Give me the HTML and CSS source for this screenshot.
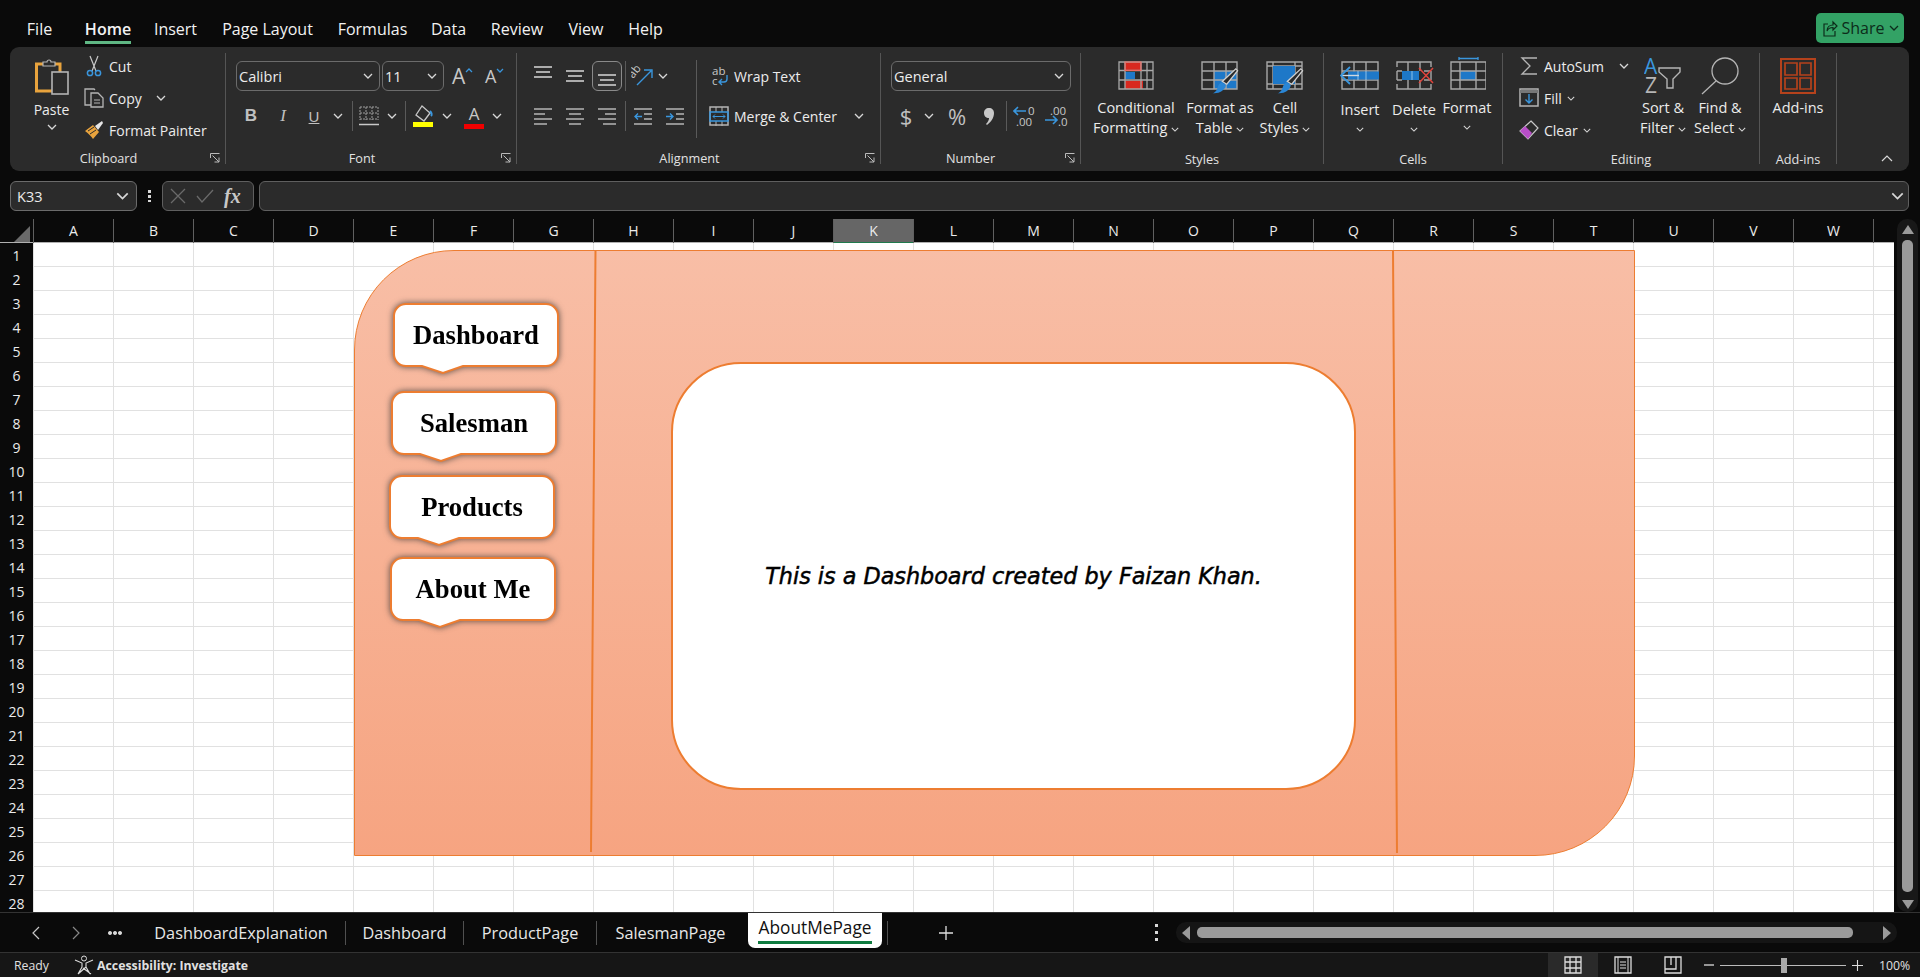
FILE: index.html
```html
<!DOCTYPE html>
<html lang="en">

<head>
    <meta charset="UTF-8">
    <title>AboutMePage - Excel</title>
    <link rel="stylesheet" href="styles.css">
</head>

<body>
    <!-- shared icons -->
    <svg class="sprites" width="0" height="0">
        <symbol id="chev" viewBox="0 0 10 6"><path d="M1 1l4 4 4-4" fill="none" stroke="#d8d8d8" stroke-width="1.3"/></symbol>
        <symbol id="launch" viewBox="0 0 10 10"><path d="M.5 5V.5H9.500M2.500 2.500L9 9M9 4.500V9H4.500" fill="none" stroke="#bbb" stroke-width="1"/></symbol>
        <symbol id="top" viewBox="0 0 18 16"><path d="M0 3h18M2 8h14M0 13h18" stroke="#d8d8d8" stroke-width="1.400"/></symbol>
        <symbol id="left" viewBox="0 0 18 17"><path d="M0 1h18M0 6h11M0 11h18M0 16h13" stroke="#b5b5b5" stroke-width="1.500"/></symbol>
        <symbol id="center" viewBox="0 0 18 17"><path d="M0 1h18M3 6h12M0 11h18M3 16h12" stroke="#b5b5b5" stroke-width="1.500"/></symbol>
        <symbol id="right" viewBox="0 0 18 17"><path d="M0 1h18M7 6h11M0 11h18M5 16h13" stroke="#b5b5b5" stroke-width="1.500"/></symbol>
        <symbol id="brush" viewBox="0 0 30 30"><path d="M27 1l2 2-12 15-5-3z" fill="#2b2b2b" stroke="#d0d0d0" stroke-width="1.400"/><path d="M11 16l5 3c-1 6-8 10-15 9 4-1 5-4 6-7 1-3 2-4 4-5z" fill="#2a86d6"/></symbol>
    </svg>

    <!-- menu row -->
    <header class="menu">
        <a>File</a>
        <a class="menu-active"><span>Home</span></a>
        <a>Insert</a>
        <a>Page Layout</a>
        <a>Formulas</a>
        <a>Data</a>
        <a>Review</a>
        <a>View</a>
        <a>Help</a>
        <button class="share">
            <svg width="16" height="18" viewBox="0 0 16 18"><path d="M6 5H2v12h11v-5M5 12c0-4 3-6 6-6V3l4 4-4 4V8.500c-3 0-5 1-6 3.500z" fill="none" stroke="#0c2c1a" stroke-width="1.200"/></svg>
            Share
            <svg class="chev" viewBox="0 0 10 6"><path d="M1 1l4 4 4-4" fill="none" stroke="#0c2c1a" stroke-width="1.300"/></svg>
        </button>
    </header>

    <!-- ribbon -->
    <section class="ribbon">
        <div class="group g-clipboard">
            <div class="group-body">
                <div class="paste">
                    <svg width="36" height="38" viewBox="0 0 36 38">
                        <path d="M9 7H2.500v27H26V7h-6" fill="none" stroke="#e8a33d" stroke-width="3"/>
                        <path d="M9 9V5h4a2 2 0 0 1 4 0h4v4z" fill="#2b2b2b" stroke="#b5b5b5" stroke-width="1.200"/>
                        <rect x="18" y="15" width="16" height="22" fill="#2b2b2b" stroke="#b5b5b5" stroke-width="1.600"/>
                    </svg>
                    <span class="paste-label">Paste</span>
                    <svg class="chev"><use href="#chev"/></svg>
                </div>
                <div class="tool-col">
                    <div class="tool">
                        <svg width="20" height="22" viewBox="0 0 20 22"><path d="M6 1l6 15M14 1L8 16" stroke="#c8c8c8" stroke-width="1.200"/><circle cx="6" cy="18" r="2.600" fill="none" stroke="#3a96dd" stroke-width="1.500"/><circle cx="14" cy="18" r="2.600" fill="none" stroke="#3a96dd" stroke-width="1.500"/></svg>
                        <span>Cut</span>
                    </div>
                    <div class="tool">
                        <svg width="20" height="20" viewBox="0 0 20 20"><path d="M7 17H1V1h9l1 1" fill="none" stroke="#b5b5b5" stroke-width="1.300"/><path d="M7 5h7l5 5v9H7z" fill="#2b2b2b" stroke="#b5b5b5" stroke-width="1.300"/><path d="M10 12h6M10 15h6" stroke="#b5b5b5"/></svg>
                        <span>Copy</span>
                        <svg class="chev chev-copy"><use href="#chev"/></svg>
                    </div>
                    <div class="tool">
                        <svg width="20" height="20" viewBox="0 0 20 20"><path d="M1 11l8-6 6 7-6 7c-2-3-5-6-8-8z" fill="#e8a33d"/><path d="M4 11l6-4M6 14l6-4" stroke="#2b2b2b"/><path d="M11 6l7-5 1 2-5 7z" fill="#e6e6e6"/></svg>
                        <span>Format Painter</span>
                    </div>
                </div>
            </div>
            <div class="group-label">Clipboard</div>
            <svg class="launcher"><use href="#launch"/></svg>
        </div>

        <div class="group g-font">
            <div class="group-body stack">
                <div class="font-row1">
                    <div class="combo combo-font">Calibri<svg class="chev"><use href="#chev"/></svg></div>
                    <div class="combo combo-size">11<svg class="chev"><use href="#chev"/></svg></div>
                    <span class="size-a size-grow">A<svg width="8" height="5" viewBox="0 0 8 5"><path d="M1 4l3-3 3 3" fill="none" stroke="#3a96dd" stroke-width="1.300"/></svg></span>
                    <span class="size-a size-shrink">A<svg width="8" height="5" viewBox="0 0 8 5"><path d="M1 1l3 3 3-3" fill="none" stroke="#3a96dd" stroke-width="1.300"/></svg></span>
                </div>
                <div class="font-row2 cells">
                    <b class="fmt fmt-b">B</b>
                    <i class="fmt fmt-i">I</i>
                    <u class="fmt fmt-u">U</u>
                    <svg class="chev"><use href="#chev"/></svg>
                    <span class="vsep"></span>
                    <svg width="20" height="20" viewBox="0 0 20 20"><path d="M1 1h18M1 7h18M1 13h18M1 1v13M7 1v13M13 1v13M19 1v13" stroke="#a0a0a0" stroke-dasharray="2 1" fill="none"/><path d="M0 18.500h20" stroke="#c8c8c8" stroke-width="1.500"/></svg>
                    <svg class="chev"><use href="#chev"/></svg>
                    <span class="vsep"></span>
                    <svg width="20" height="24" viewBox="0 0 20 24"><path d="M9 2l8 7-6 8-8-6z" fill="none" stroke="#c8c8c8" stroke-width="1.300"/><path d="M17 7c2 2 2 4 1 5" stroke="#3a96dd" stroke-width="2" fill="none"/><rect y="18" width="20" height="5" fill="#ffff00"/></svg>
                    <svg class="chev"><use href="#chev"/></svg>
                    <span class="color-a">A</span>
                    <svg class="chev"><use href="#chev"/></svg>
                </div>
            </div>
            <div class="group-label">Font</div>
            <svg class="launcher"><use href="#launch"/></svg>
        </div>

        <div class="group g-align">
            <div class="group-body">
                <div class="align-grid cells">
                    <svg class="al al-up"><use href="#top"/></svg>
                    <svg class="al"><use href="#top"/></svg>
                    <span class="al-active"><svg class="al"><use href="#top"/></svg></span>
                    <span class="vsep"></span>
                    <span class="orient">
                        <svg width="22" height="22" viewBox="0 0 22 22"><text class="mini" transform="translate(2 14) rotate(-50)">ab</text><path d="M6 20L20 6M13 5h8v8" fill="none" stroke="#3a96dd" stroke-width="1.400"/></svg>
                        <svg class="chev"><use href="#chev"/></svg>
                    </span>

                    <svg class="al-row2"><use href="#left"/></svg>
                    <svg class="al-row2"><use href="#center"/></svg>
                    <svg class="al-row2"><use href="#right"/></svg>
                    <span class="vsep"></span>
                    <svg width="18" height="17" viewBox="0 0 18 17"><path d="M0 1h18M10 6h8M10 11h8M0 16h18" stroke="#b5b5b5" stroke-width="1.500"/><path d="M8 8.500H1M4 5.500l-3 3 3 3" fill="none" stroke="#3a96dd" stroke-width="1.400"/></svg>
                    <svg width="18" height="17" viewBox="0 0 18 17"><path d="M0 1h18M10 6h8M10 11h8M0 16h18" stroke="#b5b5b5" stroke-width="1.500"/><path d="M0 8.500h7M4 5.500l3 3-3 3" fill="none" stroke="#3a96dd" stroke-width="1.400"/></svg>
                </div>
                <span class="vsep vsep-tall"></span>
                <div class="wrap-col">
                    <div class="tool">
                        <svg width="20" height="20" viewBox="0 0 20 20"><text x="3" y="9" class="mini">ab</text><text x="3" y="19" class="mini">c</text><path d="M18 9v4c0 2-1 3-3 3H10M13 13l-3 3 3 3" fill="none" stroke="#3a96dd" stroke-width="1.400"/></svg>
                        <span>Wrap Text</span>
                    </div>
                    <div class="tool">
                        <svg width="20" height="20" viewBox="0 0 20 20"><rect x="1" y="1" width="18" height="18" fill="none" stroke="#b5b5b5" stroke-width="1.500"/><path d="M7 1v5M13 1v5M7 15v5M13 15v5" stroke="#b5b5b5"/><rect x="1" y="6" width="18" height="9" fill="none" stroke="#3a96dd" stroke-width="1.500"/><path d="M4 10.500h12M6 8.500l-2 2 2 2M14 8.500l2 2-2 2" fill="none" stroke="#3a96dd"/></svg>
                        <span>Merge &amp; Center</span>
                        <svg class="chev chev-merge"><use href="#chev"/></svg>
                    </div>
                </div>
            </div>
            <div class="group-label">Alignment</div>
            <svg class="launcher"><use href="#launch"/></svg>
        </div>

        <div class="group g-number">
            <div class="group-body stack">
                <div class="combo combo-number">General<svg class="chev"><use href="#chev"/></svg></div>
                <div class="number-row cells">
                    <span class="num-sign">$</span>
                    <svg class="chev"><use href="#chev"/></svg>
                    <span class="num-sign">%</span>
                    <svg width="10" height="17" viewBox="0 0 10 17"><path d="M5 0c3 0 5 2 5 5 0 5-3 9-7 12l-1-1c2-2 3-4 3-6-3 0-5-2-5-5s2-5 5-5z" fill="#c8c8c8"/></svg>
                    <span class="vsep"></span>
                    <svg width="22" height="22" viewBox="0 0 22 22"><text x="15" y="10" class="mini">0</text><text x="3" y="21" class="mini">.00</text><path d="M13 6H1M5 2L1 6l4 4" fill="none" stroke="#3a96dd" stroke-width="1.600"/></svg>
                    <svg width="24" height="22" viewBox="0 0 24 22"><text x="6" y="10" class="mini">.00</text><text x="14" y="21" class="mini">.0</text><path d="M1 15h12M9 11l4 4-4 4" fill="none" stroke="#3a96dd" stroke-width="1.600"/></svg>
                </div>
            </div>
            <div class="group-label">Number</div>
            <svg class="launcher"><use href="#launch"/></svg>
        </div>

        <div class="group g-styles">
            <div class="group-body big-row styles-row">
                <div class="big">
                    <span class="big-icon">
                        <svg width="36" height="30" viewBox="0 0 36 30"><rect x="7" y="1" width="16" height="8.500" fill="#d8281f"/><rect x="7" y="11" width="10" height="7" fill="#1e78c8"/><rect x="7" y="19.500" width="18" height="8.500" fill="#d8281f"/><path d="M1 1h34v27H1zM1 9.500h34M1 19h34M7 1v27M23 1v27M29 1v27" fill="none" stroke="#a8a8a8" stroke-width="1.300"/><rect x="7" y="1" width="16" height="8.500" fill="none" stroke="#ee6a62"/></svg>
                    </span>
                    <span>Conditional</span>
                    <span>Formatting <svg class="chev chev-sm"><use href="#chev"/></svg></span>
                </div>
                <div class="big">
                    <span class="big-icon">
                        <svg width="40" height="38" viewBox="0 0 40 38"><rect x="14" y="14" width="23" height="18" fill="#1e78c8"/><path d="M2 5h35v27H2zM2 14h35M2 23h35M14 5v27M26 5v27" fill="none" stroke="#a8a8a8" stroke-width="1.400"/><use href="#brush" x="11" y="11" width="28" height="27"/></svg>
                    </span>
                    <span>Format as</span>
                    <span>Table <svg class="chev chev-sm"><use href="#chev"/></svg></span>
                </div>
                <div class="big">
                    <span class="big-icon">
                        <svg width="40" height="38" viewBox="0 0 40 38"><path d="M2 5h35v27H2zM2 9h35M2 27h35M8 5v27M30 5v27" fill="none" stroke="#a8a8a8" stroke-width="1.400"/><rect x="8" y="9" width="22" height="18" fill="#1e78c8"/><use href="#brush" x="11" y="11" width="28" height="27"/></svg>
                    </span>
                    <span>Cell</span>
                    <span>Styles <svg class="chev chev-sm"><use href="#chev"/></svg></span>
                </div>
            </div>
            <div class="group-label">Styles</div>
        </div>

        <div class="group g-cells">
            <div class="group-body big-row cells-row">
                <div class="big big-low">
                    <span class="big-icon">
                        <svg width="40" height="30" viewBox="0 0 40 30"><path d="M2 1h36v27H2zM2 10h36M2 19h36M14 1v27M26 1v27" fill="none" stroke="#a8a8a8" stroke-width="1.400"/><path d="M8 10.500h31v8H8z" fill="#1e78c8"/><path d="M26 10v9M18 10v9" stroke="#8cc0e8"/><path d="M19 14.500H1" stroke="#d0d8e0" stroke-width="1.400"/><path d="M10 6l-9 8.500 9 8.500" fill="none" stroke="#3a96dd" stroke-width="1.800"/></svg>
                    </span>
                    <span>Insert</span>
                    <svg class="chev chev-sm"><use href="#chev"/></svg>
                </div>
                <div class="big big-low">
                    <span class="big-icon">
                        <svg width="40" height="30" viewBox="0 0 40 30"><path d="M3 6V1h34v5M3 23v5h34v-5M3 10h5M3 19h5M3 10v9M14 1v9M14 19v9M26 1v9M26 19v9M30 10h7M30 19h7M37 10v9" fill="none" stroke="#a8a8a8" stroke-width="1.400"/><rect x="8" y="10" width="17" height="9" fill="#1e78c8"/><path d="M18 10v9" stroke="#8cc0e8"/><path d="M25 7l14 15M39 7L25 22" stroke="#e0443c" stroke-width="1.500"/></svg>
                    </span>
                    <span>Delete</span>
                    <svg class="chev chev-sm"><use href="#chev"/></svg>
                </div>
                <div class="big">
                    <span class="big-icon">
                        <svg width="38" height="38" viewBox="0 0 38 38"><path d="M11 1.500h19M11 0v3M30 0v3" stroke="#3a96dd" stroke-width="1.300"/><rect x="12" y="14" width="16" height="9" fill="#1e78c8"/><path d="M3 5h35v27H3zM3 14h35M3 23h35M12 5v27M28 5v27" fill="none" stroke="#a8a8a8" stroke-width="1.400"/></svg>
                    </span>
                    <span>Format</span>
                    <svg class="chev chev-sm"><use href="#chev"/></svg>
                </div>
            </div>
            <div class="group-label">Cells</div>
        </div>

        <div class="group g-editing">
            <div class="group-body">
                <div class="tool-col edit-col">
                    <div class="tool">
                        <svg width="20" height="20" viewBox="0 0 20 20"><path d="M18 2H3l8 8-8 8h15" fill="none" stroke="#b5b5b5" stroke-width="1.300"/></svg>
                        <span>AutoSum</span>
                        <svg class="chev chev-sum"><use href="#chev"/></svg>
                    </div>
                    <div class="tool">
                        <svg width="20" height="20" viewBox="0 0 20 20"><rect x="1" y="1" width="18" height="17" fill="none" stroke="#b5b5b5" stroke-width="1.500"/><path d="M1 3.500h18" stroke="#777" stroke-width="3"/><path d="M10 6v9M6.500 11.500L10 15l3.500-3.500" fill="none" stroke="#3a96dd" stroke-width="1.400"/></svg>
                        <span>Fill</span>
                        <svg class="chev chev-sm"><use href="#chev"/></svg>
                    </div>
                    <div class="tool">
                        <svg width="20" height="20" viewBox="0 0 20 20"><path d="M12 1l7 7-10 11-8-8z" fill="none" stroke="#c8c8c8" stroke-width="1.200"/><path d="M6 6l7 7-4 6-8-8z" fill="#b84ec8"/></svg>
                        <span>Clear</span>
                        <svg class="chev chev-sm"><use href="#chev"/></svg>
                    </div>
                </div>
                <div class="big">
                    <span class="big-icon">
                        <svg width="38" height="36" viewBox="0 0 38 36"><text x="0" y="16" class="sort-a">A</text><text x="1" y="35" class="sort-z">Z</text><path d="M15 10h21v4l-7 7v9h-6V21l-8-7z" fill="none" stroke="#b5b5b5" stroke-width="1.400"/></svg>
                    </span>
                    <span>Sort &amp;</span>
                    <span>Filter <svg class="chev chev-sm"><use href="#chev"/></svg></span>
                </div>
                <div class="big">
                    <span class="big-icon">
                        <svg width="38" height="38" viewBox="0 0 38 38"><circle cx="24" cy="14" r="13" fill="none" stroke="#b5b5b5" stroke-width="1.300"/><path d="M15 24L1 37" stroke="#b5b5b5" stroke-width="1.300"/></svg>
                    </span>
                    <span>Find &amp;</span>
                    <span>Select <svg class="chev chev-sm"><use href="#chev"/></svg></span>
                </div>
            </div>
            <div class="group-label">Editing</div>
        </div>

        <div class="group g-addins">
            <div class="group-body big-row">
                <div class="big">
                    <span class="big-icon">
                        <svg width="36" height="36" viewBox="0 0 36 36"><path d="M1 1h34v34H1z" fill="none" stroke="#b5421c" stroke-width="2"/><path d="M5 5h12v12H5zM20 5h11v12H20zM5 20h12v11H5zM20 20h11v11H20z" fill="none" stroke="#b5421c" stroke-width="1.700"/></svg>
                    </span>
                    <span>Add-ins</span>
                </div>
            </div>
            <div class="group-label">Add-ins</div>
        </div>

        <svg class="collapse" viewBox="0 0 12 7"><path d="M1 6l5-5 5 5" fill="none" stroke="#d8d8d8" stroke-width="1.200"/></svg>
    </section>

    <!-- formula bar -->
    <section class="formula">
        <div class="combo name-box">K33<svg class="chev chev-name"><use href="#chev"/></svg></div>
        <span class="dots"></span>
        <div class="fx-box">
            <svg width="16" height="16" viewBox="0 0 16 16"><path d="M1 1l14 14M15 1L1 15" stroke="#6a6a6a" stroke-width="1.300"/></svg>
            <svg width="18" height="14" viewBox="0 0 18 14"><path d="M1 7l5 6L17 1" fill="none" stroke="#6a6a6a" stroke-width="1.300"/></svg>
            <span class="fx">fx</span>
        </div>
        <div class="formula-input"><svg class="chev chev-name"><use href="#chev"/></svg></div>
    </section>

    <!-- column letters -->
    <div class="col-head">
        <div class="corner"></div>
        <span>A</span><span>B</span><span>C</span><span>D</span><span>E</span><span>F</span><span>G</span><span>H</span>
        <span>I</span><span>J</span><span class="col-active">K</span><span>L</span><span>M</span><span>N</span><span>O</span><span>P</span>
        <span>Q</span><span>R</span><span>S</span><span>T</span><span>U</span><span>V</span><span>W</span><span></span>
    </div>

    <main class="sheet">
        <div class="row-head">
            <span>1</span><span>2</span><span>3</span><span>4</span><span>5</span><span>6</span><span>7</span>
            <span>8</span><span>9</span><span>10</span><span>11</span><span>12</span><span>13</span><span>14</span>
            <span>15</span><span>16</span><span>17</span><span>18</span><span>19</span><span>20</span><span>21</span>
            <span>22</span><span>23</span><span>24</span><span>25</span><span>26</span><span>27</span><span>28</span>
        </div>

        <div class="grid">
            <!-- the dashboard shapes float on the cells -->
            <div class="panel">
                <svg class="panel-lines" width="1281" height="606" viewBox="0 0 1281 606">
                    <path d="M241.500 0L237 602M1039 0L1043 603" stroke="#ed7d31" stroke-width="2"/>
                </svg>

                <div class="callout call-dashboard"><svg width="170" height="72" viewBox="0 0 170 72"><path d="M13 1h140a12 12 0 0 1 12 12v38a12 12 0 0 1-12 12H70l-20 7-21-7H13A12 12 0 0 1 1 51V13A12 12 0 0 1 13 1z" fill="#fff" stroke="#ed7d31" stroke-width="2"/></svg><span>Dashboard</span></div>
                <div class="callout call-salesman"><svg width="170" height="72" viewBox="0 0 170 72"><path d="M13 1h140a12 12 0 0 1 12 12v38a12 12 0 0 1-12 12H70l-20 7-21-7H13A12 12 0 0 1 1 51V13A12 12 0 0 1 13 1z" fill="#fff" stroke="#ed7d31" stroke-width="2"/></svg><span>Salesman</span></div>
                <div class="callout call-products"><svg width="170" height="72" viewBox="0 0 170 72"><path d="M13 1h140a12 12 0 0 1 12 12v38a12 12 0 0 1-12 12H70l-20 7-21-7H13A12 12 0 0 1 1 51V13A12 12 0 0 1 13 1z" fill="#fff" stroke="#ed7d31" stroke-width="2"/></svg><span>Products</span></div>
                <div class="callout call-about"><svg width="170" height="72" viewBox="0 0 170 72"><path d="M13 1h140a12 12 0 0 1 12 12v38a12 12 0 0 1-12 12H70l-20 7-21-7H13A12 12 0 0 1 1 51V13A12 12 0 0 1 13 1z" fill="#fff" stroke="#ed7d31" stroke-width="2"/></svg><span>About Me</span></div>

                <div class="about-box">This is a Dashboard created by Faizan Khan.</div>
            </div>
        </div>
    </main>

    <div class="vscroll">
        <svg width="12" height="9" viewBox="0 0 12 9"><path d="M6 0l6 9H0z" fill="#9a9a9a"/></svg>
        <div class="vthumb"></div>
        <svg width="12" height="9" viewBox="0 0 12 9"><path d="M6 9L0 0h12z" fill="#9a9a9a"/></svg>
    </div>

    <!-- sheet tabs -->
    <nav class="tabs">
        <svg class="tab-nav" width="8" height="14" viewBox="0 0 8 14"><path d="M7 1L1 7l6 6" fill="none" stroke="#c8c8c8" stroke-width="1.200"/></svg>
        <svg class="tab-nav" width="8" height="14" viewBox="0 0 8 14"><path d="M1 1l6 6-6 6" fill="none" stroke="#888" stroke-width="1.200"/></svg>
        <svg class="tab-more" width="14" height="4" viewBox="0 0 14 4"><path d="M2 0a2 2 0 1 0 .01 0zM7 0a2 2 0 1 0 .01 0zM12 0a2 2 0 1 0 .01 0z" fill="#d8d8d8"/></svg>
        <a class="tab">DashboardExplanation</a>
        <a class="tab">Dashboard</a>
        <a class="tab">ProductPage</a>
        <a class="tab tab-last">SalesmanPage</a>
        <a class="tab-active"><span>AboutMePage</span></a>
        <span class="tab-sep"></span>
        <svg class="tab-add" width="14" height="14" viewBox="0 0 14 14"><path d="M7 0v14M0 7h14" stroke="#e0e0e0" stroke-width="1.300"/></svg>
        <span class="vdots"></span>
        <div class="hscroll">
            <svg width="8" height="14" viewBox="0 0 8 14"><path d="M8 0v14L0 7z" fill="#9a9a9a"/></svg>
            <div class="hthumb"></div>
            <svg width="8" height="14" viewBox="0 0 8 14"><path d="M0 0v14l8-7z" fill="#9a9a9a"/></svg>
        </div>
    </nav>

    <footer class="status">
        <span class="ready">Ready</span>
        <svg class="acc-icon" width="20" height="20" viewBox="0 0 20 20"><circle cx="10" cy="3.500" r="2.500" fill="none" stroke="#ddd"/><path d="M1 5l7 3v4l-4 7M19 5l-7 3v4l4 7M9 13l8 6M12 12l-8 7" fill="none" stroke="#ddd" stroke-width="1.100"/></svg>
        <b class="acc-text">Accessibility: Investigate</b>
        <div class="views">
            <span class="view view-on"><svg width="18" height="18" viewBox="0 0 18 18"><path d="M1 1h16v16H1zM1 6h16M1 12h16M6 1v16M12 1v16" fill="none" stroke="#ddd" stroke-width="1.300"/></svg></span>
            <span class="view"><svg width="18" height="18" viewBox="0 0 18 18"><path d="M1 1h16v16H1z" fill="none" stroke="#ddd" stroke-width="1.300"/><path d="M4 1v16M14 1v16M6 6h6M6 9h6M6 12h6" stroke="#ddd"/></svg></span>
            <span class="view"><svg width="18" height="18" viewBox="0 0 18 18"><path d="M1 1h16v16H1zM1 13h11V1M7 1v8" fill="none" stroke="#ddd" stroke-width="1.300"/></svg></span>
        </div>
        <div class="zoom">
            <svg width="10" height="10" viewBox="0 0 10 10"><path d="M0 5h10" stroke="#ddd" stroke-width="1.300"/></svg>
            <div class="slider"><i></i></div>
            <svg width="11" height="11" viewBox="0 0 11 11"><path d="M0 5.500h11M5.500 0v11" stroke="#ddd" stroke-width="1.100"/></svg>
            <span class="zoom-pct">100%</span>
        </div>
    </footer>
</body>

</html>
```

FILE: styles.css
```css
* {
    box-sizing: border-box;
}

html,
body {
    margin: 0;
    height: 977px;
    overflow: hidden;
}

body {
    display: flex;
    flex-direction: column;
    background: #0a0a0a;
    color: #ececec;
    font-family: "Open Sans", "Noto Sans", sans-serif;
    font-size: 14px;
}

.sprites {
    position: absolute;
}

svg {
    display: block;
    flex: none;
}

.chev {
    width: 10px;
    height: 6px;
}

.chev-sm {
    display: inline-block;
    width: 8px;
    height: 5px;
    vertical-align: middle;
}

/* menu row */
.menu {
    height: 47px;
    flex: none;
    display: grid;
    grid-template-columns: 49px 88px 47px 137px 73px 79px 58px 80px 39px 1fr;
    padding: 18px 16px 0 15px;
    font-size: 16px;
    line-height: 22px;
    text-align: center;
    color: #f2f2f2;
}

.menu-active span {
    display: inline-block;
    height: 26px;
    font-weight: 600;
    border-bottom: 3px solid #5fb784;
}

.share {
    justify-self: end;
    margin-top: -5px;
    width: 88px;
    height: 30px;
    display: flex;
    align-items: center;
    justify-content: center;
    gap: 4px;
    padding: 0;
    background: #33a265;
    border: none;
    border-radius: 5px;
    color: #0c2c1a;
    font: 16px "Open Sans", sans-serif;
}

/* ribbon */
.ribbon {
    height: 124px;
    flex: none;
    margin: 0 11px 0 10px;
    display: flex;
    background: #2b2b2b;
    border-radius: 9px;
}

.group {
    position: relative;
    height: 111px;
    margin-top: 6px;
    border-right: 1px solid #555;
    display: flex;
    flex-direction: column;
    flex: none;
}

.group-body {
    height: 99px;
    display: flex;
}

.group-label {
    height: 12px;
    padding-top: 1px;
    line-height: 12px;
    font-size: 12.700px;
    text-align: center;
    color: #e2e2e2;
}

.launcher {
    position: absolute;
    right: 5px;
    bottom: 1px;
    width: 10px;
    height: 10px;
}

.g-clipboard {
    width: 216px;
}

.g-font {
    width: 291px;
}

.g-align {
    width: 364px;
}

.g-number {
    width: 200px;
}

.g-styles {
    width: 243px;
}

.g-cells {
    width: 179px;
}

.g-editing {
    width: 257px;
}

.g-addins {
    width: 77px;
}

.g-clipboard .group-label,
.g-font .group-label,
.g-align .group-label {
    padding: 0 18px 0 0;
}

.g-number .group-label {
    padding: 0 20px 0 0;
}

.tool-col {
    display: flex;
    flex-direction: column;
    gap: 4px;
    margin: -1px 0 0 8px;
}

.tool {
    height: 28px;
    display: flex;
    align-items: center;
    gap: 5px;
    white-space: nowrap;
}

.paste {
    width: 49px;
    margin-left: 17px;
    padding-top: 4px;
    display: flex;
    flex-direction: column;
    align-items: center;
}

.paste-label {
    margin-top: 4px;
    line-height: 22px;
    height: 25px;
}

.chev-copy {
    margin-left: 9px;
}

.chev-merge {
    margin-left: 12px;
}

.chev-sum {
    margin-left: 10px;
}

.stack {
    flex-direction: column;
    gap: 10px;
    padding: 8px 0 0 10px;
}

.combo {
    height: 30px;
    display: flex;
    align-items: center;
    justify-content: space-between;
    padding: 0 6px 0 2px;
    border: 1px solid #6b6b6b;
    border-radius: 6px;
    font-size: 14.500px;
}

.font-row1 {
    display: flex;
    align-items: center;
}

.combo-font {
    width: 144px;
    margin-right: 2px;
}

.combo-size {
    width: 62px;
}

.size-a {
    position: relative;
    display: flex;
    color: #c8c8c8;
    line-height: 22px;
}

.size-grow {
    font-size: 21px;
    margin-left: 8px;
    width: 33px;
}

.size-shrink {
    font-size: 18px;
    width: 20px;
}

.size-a svg {
    margin-top: 3px;
}

.cells {
    display: grid;
    align-items: center;
    justify-items: center;
    height: 30px;
}

.font-row2 {
    grid-template-columns: 30px 34px 28px 20px 8px 26px 19px 8px 28px 20px 34px 12px;
}

.fmt {
    font-family: "Liberation Sans", sans-serif;
    font-size: 15px;
    color: #c0c0c0;
}

.fmt-b {
    font-size: 17px;
}

.fmt-i {
    font-family: "Liberation Serif", serif;
    font-size: 17px;
}

.vsep {
    display: block;
    width: 1px;
    height: 30px;
    background: #5a5a5a;
}

.color-a {
    width: 20px;
    height: 25px;
    text-align: center;
    font-size: 17px;
    line-height: 19px;
    color: #c8c8c8;
    border-bottom: 5px solid #f00000;
}

.align-grid {
    height: 70px;
    margin: 8px 0 0 10px;
    grid-template-columns: 32px 32px 32px 4px 32px 32px;
    grid-template-rows: 30px 30px;
    row-gap: 10px;
}

.al {
    width: 18px;
    height: 16px;
}

.al-up {
    margin-top: -9px;
}

.al-row2 {
    width: 18px;
    height: 17px;
}

.al-active {
    width: 30px;
    height: 30px;
    display: flex;
    align-items: flex-end;
    justify-content: center;
    padding-bottom: 2px;
    background: #333;
    border: 1px solid #8a8a8a;
    border-radius: 6px;
}

.orient {
    grid-column: span 2;
    justify-self: start;
    display: flex;
    align-items: center;
    gap: 5px;
    padding-left: 4px;
}

.mini {
    font: 11.500px "Open Sans", sans-serif;
    fill: #c8c8c8;
}

.vsep-tall {
    height: 78px;
    margin: 7px 0 0 5px;
}

.wrap-col {
    margin: 9px 0 0 12px;
    display: flex;
    flex-direction: column;
    gap: 12px;
}

.combo-number {
    width: 180px;
}

.number-row {
    grid-template-columns: 30px 16px 40px 24px 10px 26px 38px;
    justify-self: start;
    width: 184px;
}

.num-sign {
    font-size: 22px;
    line-height: 30px;
    color: #c0c0c0;
}

.big-row {
    display: grid;
    justify-items: stretch;
}

.styles-row {
    padding-left: 4px;
    grid-template-columns: 102px 66px 64px;
}

.cells-row {
    padding-left: 9px;
    grid-template-columns: 54px 54px 52px;
}

.big {
    display: flex;
    flex-direction: column;
    align-items: center;
    font-size: 14.500px;
    line-height: 20px;
    white-space: nowrap;
}

.big-icon {
    height: 45px;
    display: flex;
    align-items: center;
}

.big-low span:not(.big-icon) {
    margin-top: 2px;
}

.big > .chev-sm {
    display: block;
    margin-top: 7px;
}

.edit-col {
    width: 117px;
    margin-left: 16px;
}

.g-editing .big:nth-child(2) {
    width: 54px;
}

.g-editing .big:nth-child(3) {
    width: 60px;
}

.sort-a,
.sort-z {
    font: 21px "Open Sans", sans-serif;
}

.sort-a {
    fill: #3a96dd;
}

.sort-z {
    fill: #b5b5b5;
}

.g-addins .big {
    width: 100%;
}

.collapse {
    align-self: flex-end;
    width: 12px;
    height: 7px;
    margin: 0 0 9px 44px;
}

/* formula bar */
.formula {
    height: 30px;
    flex: none;
    margin: 10px 11px 0 10px;
    display: flex;
}

.name-box {
    width: 127px;
    padding: 0 7px 0 6px;
    background: #2b2b2b;
    font-size: 14.500px;
}

.chev-name {
    width: 13px;
    height: 8px;
}

.dots {
    width: 3px;
    height: 12px;
    margin: 9px 11px 0 11px;
    background: repeating-linear-gradient(#d8d8d8 0 3px, transparent 3px 5px);
}

.fx-box {
    width: 92px;
    display: flex;
    align-items: center;
    gap: 10px;
    padding-left: 7px;
    background: #2b2b2b;
    border: 1px solid #5f5f5f;
    border-radius: 6px;
}

.fx {
    font: italic bold 20px "Liberation Serif", serif;
    color: #c8c8c8;
}

.formula-input {
    flex: 1;
    margin-left: 5px;
    display: flex;
    align-items: center;
    justify-content: flex-end;
    padding-right: 4px;
    background: #2b2b2b;
    border: 1px solid #5f5f5f;
    border-radius: 6px;
}

/* column letters */
.col-head {
    width: 1894px;
    height: 24px;
    flex: none;
    margin-top: 8px;
    display: grid;
    grid-template-columns: 33px repeat(23, 80px) 21px;
    border-bottom: 1px solid #b0b0b0;
    font-size: 14px;
    line-height: 22px;
    text-align: center;
}

.col-head span {
    padding-top: 1px;
    border-left: 1px solid #606060;
}

.corner {
    position: relative;
}

.corner::after {
    content: "";
    position: absolute;
    left: 14px;
    bottom: 2px;
    width: 16px;
    height: 16px;
    background: #6a6a6a;
    clip-path: polygon(100% 0, 100% 100%, 0 100%);
}

.col-active {
    background: #666;
    border-bottom: 2px solid #1f7a4d;
}

/* sheet */
.sheet {
    height: 669px;
    flex: none;
    display: flex;
    overflow: hidden;
}

.row-head {
    width: 33px;
    flex: none;
}

.row-head span {
    display: block;
    height: 24px;
    padding-top: 1px;
    font-size: 14px;
    line-height: 23px;
    text-align: center;
}

.grid {
    position: relative;
    width: 1861px;
    flex: none;
    background-color: #fff;
    background-image:
        linear-gradient(to right, #e1e1e1 1px, transparent 1px),
        linear-gradient(to top, #e1e1e1 1px, transparent 1px);
    background-size: 80px 24px;
}

.panel {
    position: absolute;
    left: 321px;
    top: 7px;
    width: 1281px;
    height: 606px;
    background: linear-gradient(#f8bea6, #f6a481);
    border: 1px solid #ed7d31;
    border-radius: 100px 0 100px 0;
}

.panel-lines {
    position: absolute;
    left: -1px;
    top: -1px;
}

.callout {
    position: absolute;
    width: 170px;
    height: 72px;
    filter: drop-shadow(0 0 3px rgba(50, 50, 50, 0.8));
}

.callout span {
    position: absolute;
    left: 0;
    top: 0;
    width: 166px;
    text-align: center;
    font: bold 26.670px/64px "Liberation Serif", serif;
    color: #000;
}

.call-dashboard {
    left: 38px;
    top: 52px;
}

.call-salesman {
    left: 36px;
    top: 140px;
}

.call-products {
    left: 34px;
    top: 224px;
}

.call-about {
    left: 35px;
    top: 306px;
}

.about-box {
    position: absolute;
    left: 316px;
    top: 111px;
    width: 685px;
    height: 428px;
    display: flex;
    align-items: center;
    justify-content: center;
    background: #fff;
    border: 2px solid #ed7d31;
    border-radius: 70px;
    color: #000;
    font: italic 22.300px "DejaVu Sans", sans-serif;
    -webkit-text-stroke: 0.5px #000;
}

/* sits over the right end of the header and sheet */
.vscroll {
    position: absolute;
    left: 1897px;
    top: 219px;
    width: 21px;
    height: 693px;
    padding: 6px 0 3px;
    display: flex;
    flex-direction: column;
    align-items: center;
    gap: 6px;
    background: #181818;
    border-radius: 10px;
}

.vthumb {
    flex: 1;
    width: 11px;
    margin-bottom: 2px;
    background: #9a9a9a;
    border-radius: 5px;
}

/* sheet tabs */
.tabs {
    height: 40px;
    flex: none;
    display: flex;
    align-items: center;
    border-top: 1px solid #333;
    font-size: 16.300px;
    color: #e8e8e8;
}

.tab-nav {
    margin-left: 32px;
}

.tab-more {
    margin: 0 15px 0 28px;
}

.tab {
    display: block;
    height: 24px;
    line-height: 24px;
    text-align: center;
    border-right: 1px solid #505050;
}

.tab:nth-of-type(1) {
    width: 209px;
}

.tab:nth-of-type(2) {
    width: 118px;
}

.tab:nth-of-type(3) {
    width: 133px;
}

.tab-last {
    width: 147px;
    border-right: none;
}

.tab-active {
    width: 134px;
    height: 35px;
    margin: -5px 0 0 4px;
    display: flex;
    justify-content: center;
    align-items: flex-start;
    background: #fff;
    border-radius: 0 0 7px 7px;
    color: #111;
    font-size: 17.300px;
}

.tab-active span {
    width: 114px;
    height: 31px;
    padding-top: 4px;
    text-align: center;
    line-height: 22px;
    white-space: nowrap;
    border-bottom: 3px solid #107c41;
}

.tab-sep {
    width: 1px;
    height: 24px;
    margin-left: 5px;
    background: #505050;
}

.tab-add {
    margin-left: 51px;
}

.vdots {
    width: 3px;
    height: 17px;
    margin-left: 202px;
    background: repeating-linear-gradient(#d8d8d8 0 3px, transparent 3px 7px);
}

.hscroll {
    width: 721px;
    height: 21px;
    margin-left: 18px;
    display: flex;
    align-items: center;
    gap: 7px;
    padding: 0 6px;
    background: #151515;
    border-radius: 10px;
}

.hthumb {
    flex: 1;
    height: 11px;
    margin-right: 23px;
    background: #9a9a9a;
    border-radius: 5px;
}

/* status bar */
.status {
    flex: 1;
    display: flex;
    align-items: center;
    background: #161616;
    border-top: 1px solid #333;
    font-size: 12.300px;
    color: #e0e0e0;
}

.ready {
    margin-left: 14px;
}

.acc-icon {
    margin-left: 25px;
}

.acc-text {
    margin-left: 3px;
}

.views {
    margin-left: auto;
    height: 100%;
    display: flex;
}

.view {
    width: 50px;
    display: flex;
    align-items: center;
    justify-content: center;
}

.view-on {
    background: #2a2a2a;
}

.zoom {
    width: 222px;
    padding-left: 6px;
    display: flex;
    align-items: center;
    gap: 6px;
}

.slider {
    position: relative;
    width: 126px;
    height: 1px;
    background: #bbb;
}

.slider i {
    position: absolute;
    left: 61px;
    top: -7px;
    width: 6px;
    height: 15px;
    background: #aaa;
}

.zoom-pct {
    margin-left: 10px;
}
```
